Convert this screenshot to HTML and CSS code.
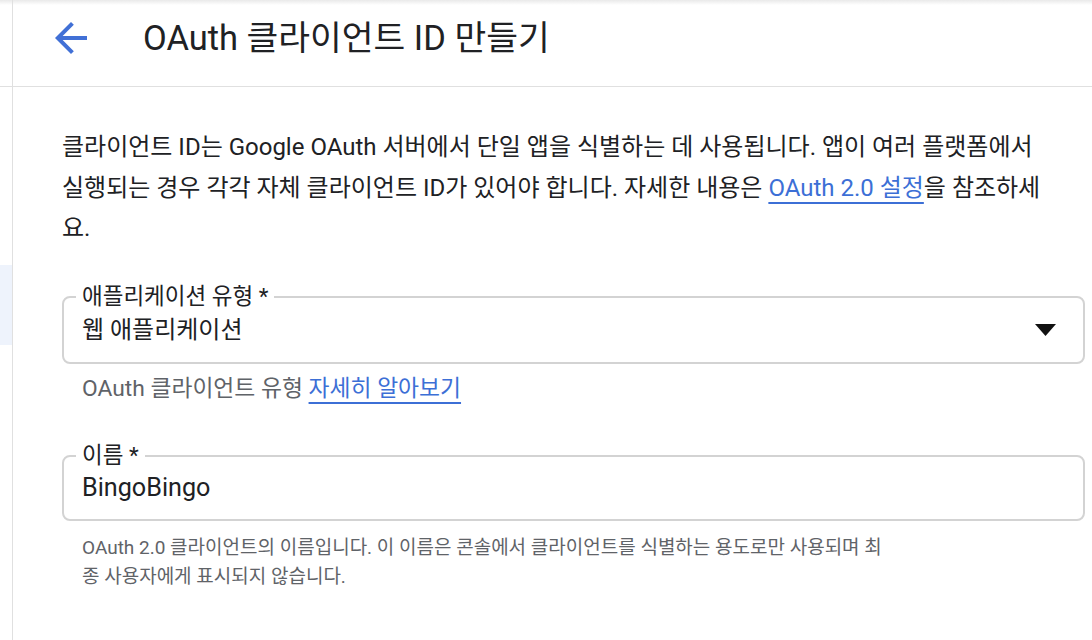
FILE: index.html
```html
<!DOCTYPE html>
<html lang="ko">
<head>
<meta charset="utf-8">
<title>OAuth 클라이언트 ID 만들기</title>
<link rel="stylesheet" href="styles.css">
</head>
<body>
<div class="page">
  <aside class="rail">
    <div class="rail-head"></div>
    <div class="rail-active"></div>
  </aside>
  <main class="main">
    <header class="header">
      <button class="back" type="button" aria-label="뒤로">
        <svg viewBox="0 0 24 24" width="48" height="48"><path d="M20 11H7.83l5.59-5.59L12 4l-8 8 8 8 1.41-1.41L7.83 13H20v-2z"/></svg>
      </button>
      <h1 class="title">OAuth 클라이언트 ID 만들기</h1>
    </header>
    <section class="content">
      <p class="intro">클라이언트 ID는 Google OAuth 서버에서 단일 앱을 식별하는 데 사용됩니다. 앱이 여러 플랫폼에서<br>실행되는 경우 각각 자체 클라이언트 ID가 있어야 합니다. 자세한 내용은 <a class="link" href="#">OAuth 2.0 설정</a>을 참조하세<br>요.</p>

      <div class="field field-select">
        <span class="field-label">애플리케이션 유형 *</span>
        <span class="field-value">웹 애플리케이션</span>
        <svg class="caret" viewBox="0 0 21 12" width="21" height="12"><path d="M0 0H21L10.5 12Z"/></svg>
      </div>
      <p class="hint hint-type">OAuth 클라이언트 유형 <a class="link" href="#">자세히 알아보기</a></p>

      <div class="field field-name">
        <span class="field-label">이름 *</span>
        <span class="field-value value-latin">BingoBingo</span>
      </div>
      <p class="hint hint-name">OAuth 2.0 클라이언트의 이름입니다. 이 이름은 콘솔에서 클라이언트를 식별하는 용도로만 사용되며 최<br>종 사용자에게 표시되지 않습니다.</p>
    </section>
  </main>
</div>
</body>
</html>
```

FILE: styles.css
```css
html, body {
  margin: 0;
  padding: 0;
  background: #fff;
}

body {
  font-family: Roboto, "Noto Sans CJK KR", sans-serif;
  color: #202124;
}

.page {
  display: flex;
  width: 1092px;
  height: 640px;
  overflow: hidden;
  background: linear-gradient(#e9e9e9, #ffffff 5px);
}

.rail {
  width: 12px;
  flex: 0 0 12px;
  border-right: 1px solid #e0e0e0;
}

.rail-head {
  height: 86px;
  border-bottom: 1px solid #e0e0e0;
}

.rail-active {
  margin-top: 178px;
  height: 80px;
  background: #eef3fc;
}

.main {
  flex: 1;
  min-width: 0;
}

.header {
  box-sizing: border-box;
  height: 87px;
  border-bottom: 1px solid #e0e0e0;
  display: flex;
  align-items: flex-start;
  gap: 48px;
  padding: 14px 0 0 34px;
}

.back {
  width: 48px;
  height: 48px;
  padding: 0;
  border: 0;
  background: transparent;
  display: flex;
}

.back svg {
  fill: #4170d6;
}

.title {
  margin: 0;
  font-size: 34.5px;
  font-weight: 400;
  line-height: 48px;
  color: #202124;
}

.content {
  padding: 40px 7px 0 49px;
}

.intro {
  margin: 0;
  font-size: 24px;
  line-height: 40.5px;
}

.link {
  color: #3c6fd6;
  text-decoration: underline;
  text-decoration-thickness: 2px;
  text-underline-offset: 6px;
}

.field {
  position: relative;
  box-sizing: border-box;
  display: flex;
  align-items: center;
  border: 2px solid #d3d3d3;
  border-radius: 8px;
  padding: 0 18px;
}

.field-select {
  margin-top: 47px;
  height: 68px;
}

.field-name {
  margin-top: 52px;
  height: 66px;
}

.field-label {
  position: absolute;
  left: 12px;
  top: -15px;
  padding: 0 6px;
  background: #fff;
  font-size: 22.5px;
  line-height: 26px;
  color: #202124;
}

.field-value {
  font-size: 24px;
  line-height: 30px;
}

.value-latin {
  font-size: 25.2px;
}

.caret {
  margin-left: auto;
  margin-right: 9px;
  fill: #111;
}

.hint {
  margin: 0 0 0 20px;
  color: #5f6368;
}

.hint-type {
  margin-top: 11px;
  font-size: 22.8px;
  line-height: 28px;
}

.hint-name {
  margin-top: 12px;
  font-size: 19px;
  line-height: 29px;
}
```
